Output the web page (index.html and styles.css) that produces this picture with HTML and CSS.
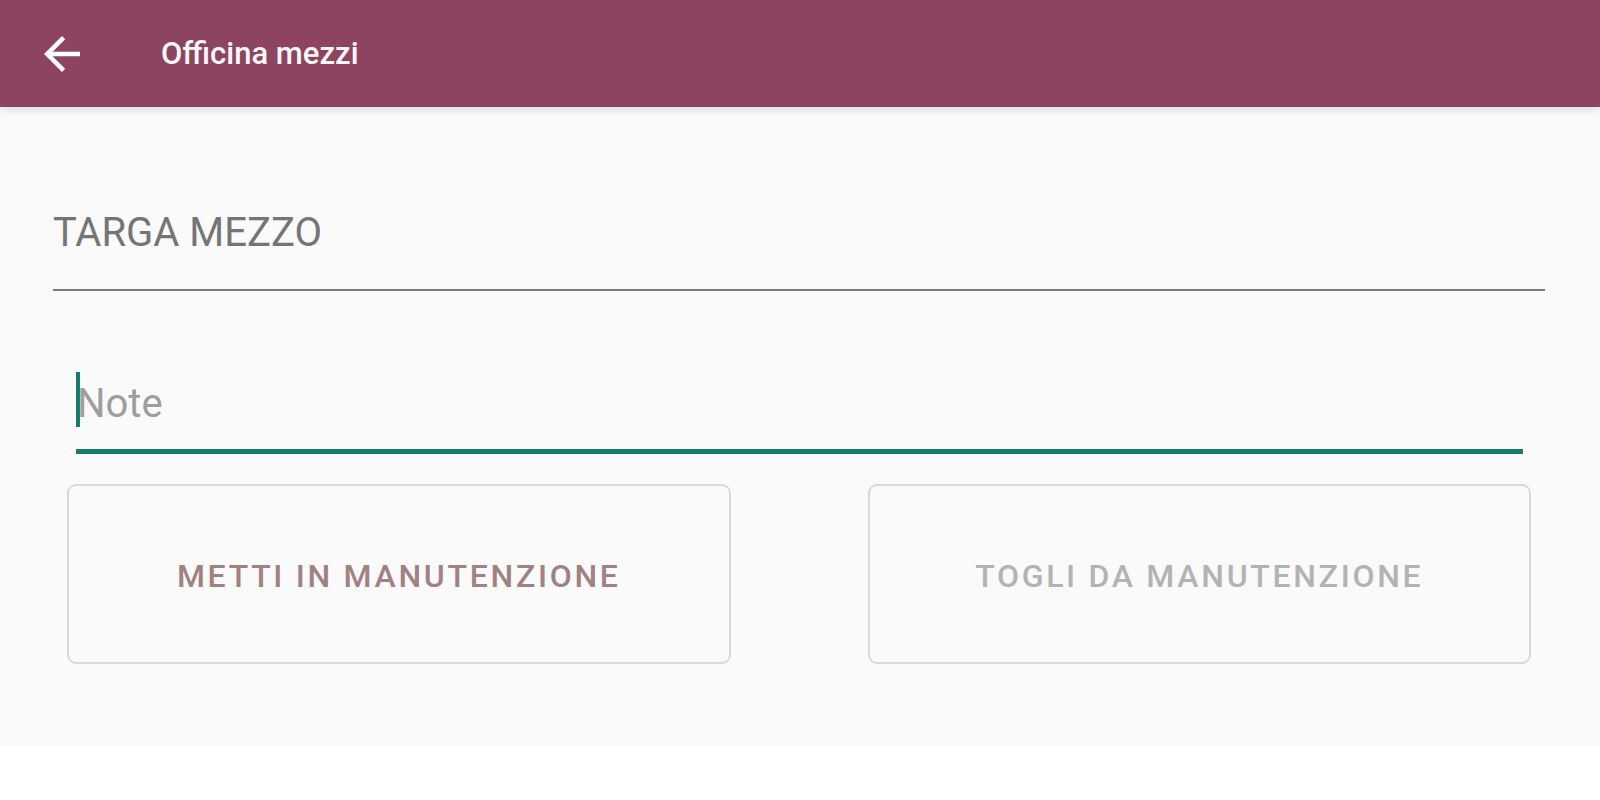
FILE: index.html
```html
<!DOCTYPE html>
<html lang="it">
<head>
<meta charset="utf-8">
<title>Officina mezzi</title>
<link rel="stylesheet" href="styles.css">
</head>
<body>
<div class="app">
  <header class="toolbar">
    <button class="back" aria-label="Indietro">
      <svg viewBox="0 0 24 24" width="54" height="54"><path d="M20 11H7.83l5.59-5.59L12 4l-8 8 8 8 1.41-1.41L7.83 13H20v-2z" fill="#ffffff"/></svg>
    </button>
    <h1 class="title">Officina mezzi</h1>
  </header>
  <main class="content">
    <div class="field-targa">TARGA MEZZO</div>
    <div class="field-note">
      <span class="cursor"></span>
      <span class="placeholder">Note</span>
    </div>
    <div class="actions">
      <button class="btn btn-primary">METTI IN MANUTENZIONE</button>
      <button class="btn btn-disabled">TOGLI DA MANUTENZIONE</button>
    </div>
  </main>
</div>
</body>
</html>
```

FILE: styles.css
```css
html, body {
  margin: 0;
  padding: 0;
  background: #ffffff;
  font-family: Roboto, "Noto Sans", "Liberation Sans", sans-serif;
}

.app {
  width: 1600px;
  background: #fafafa;
}

.toolbar {
  position: relative;
  height: 107px;
  background: #8d4460;
  display: flex;
  align-items: center;
  box-shadow: 0 3px 8px rgba(0, 0, 0, 0.12);
  z-index: 1;
}

.back {
  margin-left: 35px;
  width: 54px;
  height: 54px;
  padding: 0;
  border: 0;
  background: transparent;
  display: flex;
}

.title {
  margin: 0 0 0 72px;
  font-size: 31px;
  font-weight: 500;
  color: #fbf6f8;
  line-height: 40px;
}

.content {
  padding: 102px 55px 82px 53px;
}

.field-targa {
  font-size: 40px;
  line-height: 48px;
  color: #757575;
  padding-bottom: 32px;
  border-bottom: 2px solid #7b7b7b;
}

.field-note {
  margin: 81px 22px 0 23px;
  display: flex;
  align-items: flex-start;
  padding-bottom: 17px;
  border-bottom: 5px solid #187b6f;
}

.cursor {
  width: 4px;
  height: 55px;
  background: #187b6f;
  flex: none;
}

.placeholder {
  font-size: 40px;
  line-height: 60px;
  color: #9e9e9e;
  margin-left: -3px;
  position: relative;
  top: 2px;
}

.actions {
  margin: 30px 14px 0 14px;
  display: grid;
  grid-template-columns: 1fr 1fr;
  column-gap: 137px;
}

.btn {
  height: 180px;
  border: 2px solid #d9d9d9;
  border-radius: 9px;
  background: #fafafa;
  font-family: Roboto, "Noto Sans", "Liberation Sans", sans-serif;
  font-size: 32px;
  font-weight: 500;
  letter-spacing: 2.7px;
  padding: 4px 0 0 0;
}

.btn-primary {
  color: #a08282;
}

.btn-disabled {
  color: #b3b3b3;
}
```
